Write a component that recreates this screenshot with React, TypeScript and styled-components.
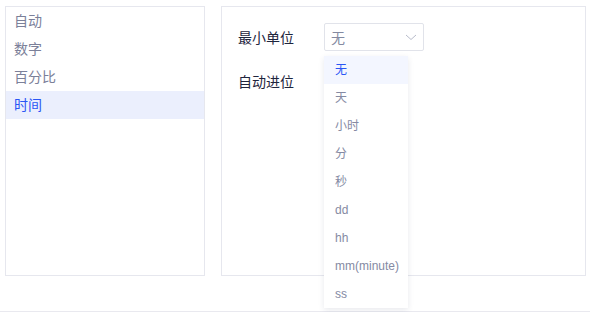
import styled, { createGlobalStyle } from "styled-components";
import { useState } from "react";

const GlobalStyle = createGlobalStyle`
  html, body {
    margin: 0;
    padding: 0;
    background: #ffffff;
    font-family: "Liberation Sans", "Noto Sans CJK SC", sans-serif;
  }
`;

const formats = ["自动", "数字", "百分比", "时间"];
const units = ["无", "天", "小时", "分", "秒", "dd", "hh", "mm(minute)", "ss"];

const App = () => {
  const [format, setFormat] = useState("时间");
  const [unit, setUnit] = useState("无");

  return (
    <>
      <GlobalStyle />
      <Page>
        <Body>
          <FormatList>
            {formats.map((f) => (
              <FormatItem key={f} $active={f === format} onClick={() => setFormat(f)}>
                {f}
              </FormatItem>
            ))}
          </FormatList>
          <SettingsPanel>
            <FieldRow>
              <FieldLabel>最小单位</FieldLabel>
              <SelectWrap>
                <SelectBox>
                  <span>{unit}</span>
                  <svg width="12" height="7" viewBox="0 0 12 7">
                    <path d="M1 1 L6 5.5 L11 1" fill="none" stroke="#b8bccb" strokeWidth="1" />
                  </svg>
                </SelectBox>
                <Dropdown>
                  {units.map((u) => (
                    <Option key={u} $active={u === unit} onClick={() => setUnit(u)}>
                      {u}
                    </Option>
                  ))}
                </Dropdown>
              </SelectWrap>
            </FieldRow>
            <FieldRow>
              <FieldLabel>自动进位</FieldLabel>
            </FieldRow>
          </SettingsPanel>
        </Body>
      </Page>
    </>
  );
};

const Page = styled.div`
  height: 312px;
  box-sizing: border-box;
  border-bottom: 1px solid #e9e9ef;
  padding: 6px 4px 0 5px;
`;

const Body = styled.div`
  display: flex;
  gap: 16px;
  height: 270px;
`;

const FormatList = styled.ul`
  list-style: none;
  margin: 0;
  padding: 0;
  width: 200px;
  box-sizing: border-box;
  border: 1px solid #e6e7ee;
`;

const FormatItem = styled.li<{ $active: boolean }>`
  height: 28px;
  line-height: 28px;
  padding-left: 8px;
  font-size: 14px;
  color: ${(p) => (p.$active ? "#2a56f5" : "#7b8099")};
  background: ${(p) => (p.$active ? "#ebeffd" : "transparent")};
  cursor: pointer;
`;

const SettingsPanel = styled.div`
  flex: 1;
  box-sizing: border-box;
  border: 1px solid #e6e7ee;
  padding: 16px;
  display: flex;
  flex-direction: column;
  gap: 16px;
`;

const FieldRow = styled.div`
  display: flex;
  align-items: center;
  height: 28px;
`;

const FieldLabel = styled.span`
  width: 86px;
  font-size: 14px;
  color: #1e253d;
`;

const SelectWrap = styled.div`
  position: relative;
`;

const SelectBox = styled.div`
  width: 100px;
  height: 28px;
  box-sizing: border-box;
  border: 1px solid #e1e3ea;
  border-radius: 2px;
  padding: 0 6px 0 6px;
  display: flex;
  align-items: center;
  justify-content: space-between;
  font-size: 14px;
  color: #848aa1;
`;

const Dropdown = styled.ul`
  position: absolute;
  top: 33px;
  left: 0;
  width: 84px;
  margin: 0;
  padding: 0;
  list-style: none;
  background: #ffffff;
  box-shadow: 0 2px 6px rgba(30, 40, 80, 0.1);
  z-index: 2;
`;

const Option = styled.li<{ $active: boolean }>`
  height: 28px;
  line-height: 28px;
  padding-left: 11px;
  font-size: 12px;
  white-space: nowrap;
  color: ${(p) => (p.$active ? "#2a56f5" : "#858aa3")};
  background: ${(p) => (p.$active ? "#f3f6ff" : "transparent")};
  cursor: pointer;
`;

export default App;
